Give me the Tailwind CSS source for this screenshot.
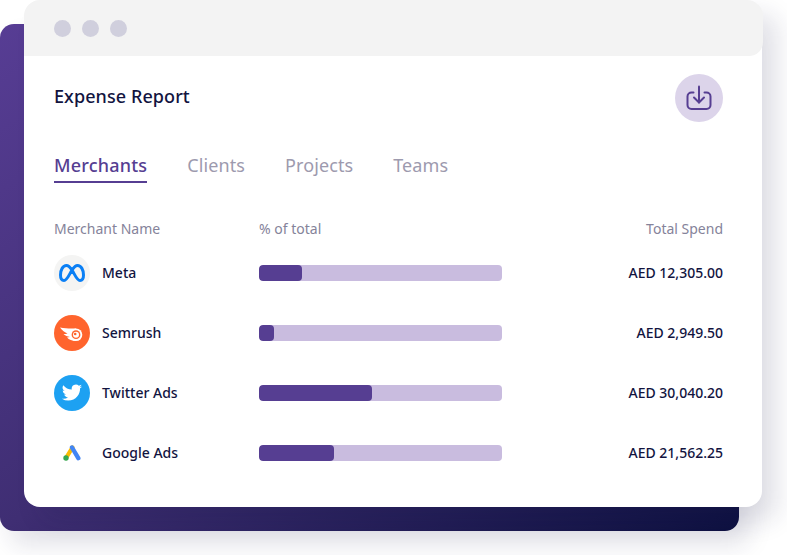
<!DOCTYPE html>
<html lang="en">
<head>
  <meta charset="UTF-8" />
  <title>Expense Report</title>
  <script src="https://cdn.jsdelivr.net/npm/@tailwindcss/browser@4"></script>
</head>
<body class="bg-white w-[787px] h-[555px] overflow-hidden font-['Noto_Sans',sans-serif]">
  <div class="relative w-[787px] h-[555px]">
    <!-- purple backdrop behind the card -->
    <div class="absolute left-0 top-[24px] w-[739px] h-[507px] rounded-[14px] bg-gradient-to-br from-[#573d94] via-[#3f2e73] to-[#0d1040] shadow-[10px_14px_24px_rgba(30,30,80,0.13)]"></div>

    <div class="absolute left-[24px] top-0 w-[738px] h-[507px] bg-white rounded-[16px] shadow-[16px_14px_24px_rgba(30,30,80,0.13)]">
      <!-- window bar -->
      <div class="h-[56px] w-[739px] bg-[#f3f3f3] rounded-t-[16px] rounded-br-[14px] flex items-center gap-[11px] pl-[30px]">
        <span class="w-[17px] h-[17px] rounded-full bg-[#d0cfdd]"></span>
        <span class="w-[17px] h-[17px] rounded-full bg-[#d0cfdd]"></span>
        <span class="w-[17px] h-[17px] rounded-full bg-[#d0cfdd]"></span>
      </div>

      <div class="px-[30px] pr-[39px]">
        <div class="flex items-start justify-between pt-[18px]">
          <h2 class="text-[18px] leading-[24px] font-medium text-[#12143f] tracking-[0.08px] mt-[10px]">Expense Report</h2>
          <button class="w-[48px] h-[48px] rounded-full bg-[#dcd4ea] flex items-center justify-center">
            <svg width="28" height="28" viewBox="0 0 28 28" fill="none" stroke="#563e92" stroke-width="2" stroke-linecap="round" stroke-linejoin="round">
              <path d="M8.500 8.500H6.500A4 4 0 0 0 2.500 12.500V21A4 4 0 0 0 6.500 25H21.500A4 4 0 0 0 25.500 21V12.500A4 4 0 0 0 21.500 8.500H19.500" />
              <path d="M14 2.500V18.500" />
              <path d="M9 13.500L14 18.500L19 13.500" />
            </svg>
          </button>
        </div>

        <div class="flex gap-[40px] mt-[31px] text-[18px] leading-[24px] text-[#9d9aae] tracking-[0.1px]">
          <span class="text-[#563e92] font-medium border-b-2 border-[#563e92] pb-[4px] tracking-[0.2px]">Merchants</span>
          <span>Clients</span>
          <span>Projects</span>
          <span>Teams</span>
        </div>

        <div class="grid grid-cols-[205px_243px_1fr] items-center mt-[36px] text-[14px] leading-[20px] text-[#85839a]">
          <span>Merchant Name</span>
          <span>% of total</span>
          <span class="text-right">Total Spend</span>
        </div>

        <div class="mt-[4px]">
          <div class="grid grid-cols-[205px_243px_1fr] items-center h-[60px]">
            <div class="flex items-center gap-[12px]">
              <span class="w-[36px] h-[36px] rounded-full bg-[#f4f4f3] flex items-center justify-center">
                <svg width="26" height="18" viewBox="0 0 26 18" fill="none" stroke="#0a7ff5" stroke-width="3" stroke-linecap="round">
                  <path d="M13 6C10.500 2.300 9 1.500 7.500 1.500C3.800 1.500 1.500 6 1.500 11C1.500 14.500 3 16.500 5 16.500C8 16.500 10 11 13 6C16 11 18 16.500 21 16.500C23 16.500 24.500 14.500 24.500 11C24.500 6 22.200 1.500 18.500 1.500C17 1.500 15.500 2.300 13 6Z" />
                </svg>
              </span>
              <span class="text-[14px] font-medium text-[#12143f] pb-[2px]">Meta</span>
            </div>
            <div class="h-[16px] rounded-[4px] bg-[#c9bcdf] overflow-hidden"><div class="h-full w-[43px] rounded-[4px] bg-[#563e92]"></div></div>
            <span class="text-right text-[14px] font-medium text-[#12143f] pb-[2px]">AED 12,305.00</span>
          </div>

          <div class="grid grid-cols-[205px_243px_1fr] items-center h-[60px]">
            <div class="flex items-center gap-[12px]">
              <span class="w-[36px] h-[36px] rounded-full bg-[#ff642d] flex items-center justify-center">
                <svg width="24" height="16" viewBox="0 0 24 16" fill="#fff" class="mt-[2px]">
                  <path d="M0 1.500C4 2.200 8 2.500 11 2.500L16 2.400V15C12 15 9 13.500 7 11.500C8 11.500 9 11.300 10 11C7.500 10.500 5 9.500 3.500 8C5 8 6.500 7.800 7.500 7.400C5 6.500 2 4.500 0 1.500Z" />
                  <circle cx="16" cy="8.700" r="6.300" />
                  <circle cx="16" cy="8.700" r="4.400" fill="#ff642d" />
                  <circle cx="16" cy="8.700" r="3" />
                  <circle cx="15.200" cy="8" r="1.300" fill="#ff642d" />
                </svg>
              </span>
              <span class="text-[14px] font-medium text-[#12143f] pb-[2px]">Semrush</span>
            </div>
            <div class="h-[16px] rounded-[4px] bg-[#c9bcdf] overflow-hidden"><div class="h-full w-[15px] rounded-[4px] bg-[#563e92]"></div></div>
            <span class="text-right text-[14px] font-medium text-[#12143f] pb-[2px]">AED 2,949.50</span>
          </div>

          <div class="grid grid-cols-[205px_243px_1fr] items-center h-[60px]">
            <div class="flex items-center gap-[12px]">
              <span class="w-[36px] h-[36px] rounded-full bg-[#1da1f2] flex items-center justify-center">
                <svg width="22" height="22" viewBox="0 0 24 24" fill="#fff">
                  <path d="M23 4.900c-.8.400-1.700.600-2.600.700.900-.600 1.700-1.400 2-2.500-.900.500-1.900.900-2.900 1.100A4.500 4.500 0 0 0 11.800 8.300 12.900 12.900 0 0 1 2.500 3.500a4.500 4.500 0 0 0 1.400 6.100c-.700 0-1.400-.200-2-.600 0 2.200 1.500 4.100 3.600 4.500-.700.200-1.400.200-2 .100.600 1.800 2.300 3.100 4.200 3.200A9.100 9.100 0 0 1 1 18.200 12.900 12.900 0 0 0 8 20.300c8.400 0 13.100-7.100 12.800-13.400.900-.600 1.600-1.300 2.200-2z" />
                </svg>
              </span>
              <span class="text-[14px] font-medium text-[#12143f] pb-[2px]">Twitter Ads</span>
            </div>
            <div class="h-[16px] rounded-[4px] bg-[#c9bcdf] overflow-hidden"><div class="h-full w-[113px] rounded-[4px] bg-[#563e92]"></div></div>
            <span class="text-right text-[14px] font-medium text-[#12143f] pb-[2px]">AED 30,040.20</span>
          </div>

          <div class="grid grid-cols-[205px_243px_1fr] items-center h-[60px]">
            <div class="flex items-center gap-[12px]">
              <span class="w-[36px] h-[36px] rounded-full bg-white flex items-center justify-center">
                <svg width="18" height="16" viewBox="0 0 18 16" fill="none" stroke-linecap="round">
                  <path d="M9.500 2.500L3 13" stroke="#fbbc04" stroke-width="4.200" />
                  <path d="M9 2.500L15.300 13.200" stroke="#4285f4" stroke-width="4.400" />
                  <circle cx="3" cy="13" r="2.700" fill="#34a853" />
                </svg>
              </span>
              <span class="text-[14px] font-medium text-[#12143f] pb-[2px]">Google Ads</span>
            </div>
            <div class="h-[16px] rounded-[4px] bg-[#c9bcdf] overflow-hidden"><div class="h-full w-[75px] rounded-[4px] bg-[#563e92]"></div></div>
            <span class="text-right text-[14px] font-medium text-[#12143f] pb-[2px]">AED 21,562.25</span>
          </div>
        </div>
      </div>
    </div>
  </div>
</body>
</html>
